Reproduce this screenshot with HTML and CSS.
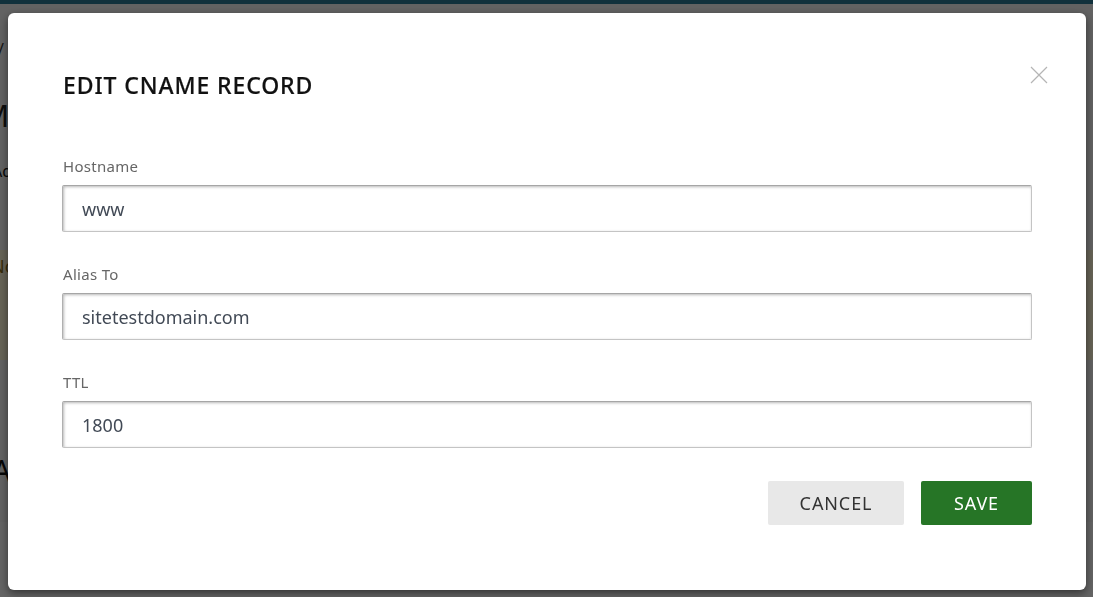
FILE: index.html
```html
<!DOCTYPE html>
<html>
<head>
<meta charset="utf-8">
<link rel="stylesheet" href="styles.css">
</head>
<body>
<div class="page">
  <div class="topbar"></div>
  <div class="crumb">/ sitetestdomain.com</div>
  <h1 class="page-title">Manage DNS</h1>
  <div class="sub">Advanced DNS records</div>
  <div class="notice">Note: changes may take up to 48 hours to propagate.</div>
  <div class="section">
    <h2 class="section-title">A Records</h2>
  </div>
  <div class="footer-band"></div>
</div>

<div class="overlay">
  <div class="modal">
    <div class="modal-head">
      <h3 class="modal-title">EDIT CNAME RECORD</h3>
      <button class="close" aria-label="Close">
        <svg width="18" height="18" viewBox="0 0 18 18"><path d="M1 1 L17 17 M17 1 L1 17" stroke="#b5b5b5" stroke-width="1.2" fill="none"/></svg>
      </button>
    </div>
    <div class="field">
      <label class="label">Hostname</label>
      <div class="input">www</div>
    </div>
    <div class="field">
      <label class="label">Alias To</label>
      <div class="input">sitetestdomain.com</div>
    </div>
    <div class="field">
      <label class="label">TTL</label>
      <div class="input">1800</div>
    </div>
    <div class="actions">
      <button class="btn btn-cancel">CANCEL</button>
      <button class="btn btn-save">SAVE</button>
    </div>
  </div>
</div>
</body>
</html>
```
FILE: styles.css
```css
* { box-sizing: border-box; }
html, body { margin: 0; padding: 0; }
body {
  width: 1093px;
  height: 597px;
  overflow: hidden;
  font-family: "Noto Sans", "Liberation Sans", sans-serif;
  background: #f4f4f4;
}
.page { display: flex; flex-direction: column; height: 597px; }
.topbar { height: 4px; background: #2c7a96; flex: none; }
.crumb { padding: 34px 0 0 0; margin-left: -2px; font-size: 16px; color: #333; height: 64px; white-space: nowrap; }
.page-title { margin: 30px 0 0 -18px; font-size: 30px; font-weight: 400; color: #222; line-height: 36px; white-space: nowrap; }
.sub { margin: 26px 0 0 -8px; font-size: 16px; color: #111; height: 90px; white-space: nowrap; }
.notice { background: #fff6d6; color: #8a6d1a; height: 110px; padding-top: 4px; font-size: 18px; margin-left: -9px; white-space: nowrap; }
.section { height: 162px; padding-top: 90px; }
.section-title { margin: 0 0 0 -8px; font-size: 30px; font-weight: 400; color: #111; white-space: nowrap; }
.footer-band { flex: 1; background: #fafafa; }

.overlay {
  position: fixed;
  inset: 0;
  background: rgba(0,0,0,0.6);
}
.modal {
  position: absolute;
  left: 8px;
  top: 13px;
  width: 1078px;
  height: 577px;
  background: #fff;
  border-radius: 6px;
  box-shadow: 0 3px 9px rgba(0,0,0,0.5);
  padding: 0 54px;
  display: flex;
  flex-direction: column;
}
.modal-head {
  display: flex;
  justify-content: space-between;
  align-items: flex-start;
  padding-top: 56px;
  height: 143px;
}
.modal-title {
  margin: 0;
  font-size: 23px;
  line-height: 32px;
  font-weight: 500;
  color: #111;
  letter-spacing: 0.9px;
  padding-left: 1px;
  -webkit-text-stroke: 0.2px #111;
}
.close {
  border: 0; background: none; padding: 0; margin: -3px -16px 0 0;
  width: 18px; height: 18px; cursor: pointer;
}
.close svg { display: block; }
.field { display: flex; flex-direction: column; height: 108px; }
.label {
  font-size: 15px;
  color: #666;
  line-height: 20px;
  height: 29px;
  padding-left: 1px;
  letter-spacing: 0.3px;
}
.input {
  height: 47px;
  border: 1px solid #c4c4c4;
  border-top-color: #a6a6a6;
  border-left-color: #b0b0b0;
  border-radius: 2px;
  box-shadow: inset 1px 1px 3px rgba(0,0,0,0.28);
  padding: 0 19px;
  display: flex;
  align-items: center;
  font-size: 18px;
  color: #424a56;
}
.actions {
  display: flex;
  justify-content: flex-end;
  gap: 17px;
  margin-top: 1px;
}
.btn {
  height: 44px;
  border: 0;
  border-radius: 2px;
  font-family: inherit;
  font-size: 18px;
  padding: 0;
  letter-spacing: 0.9px;
}
.btn-cancel { width: 136px; background: #e8e8e8; color: #333; }
.btn-save { width: 111px; background: #267526; color: #fff; }
```
